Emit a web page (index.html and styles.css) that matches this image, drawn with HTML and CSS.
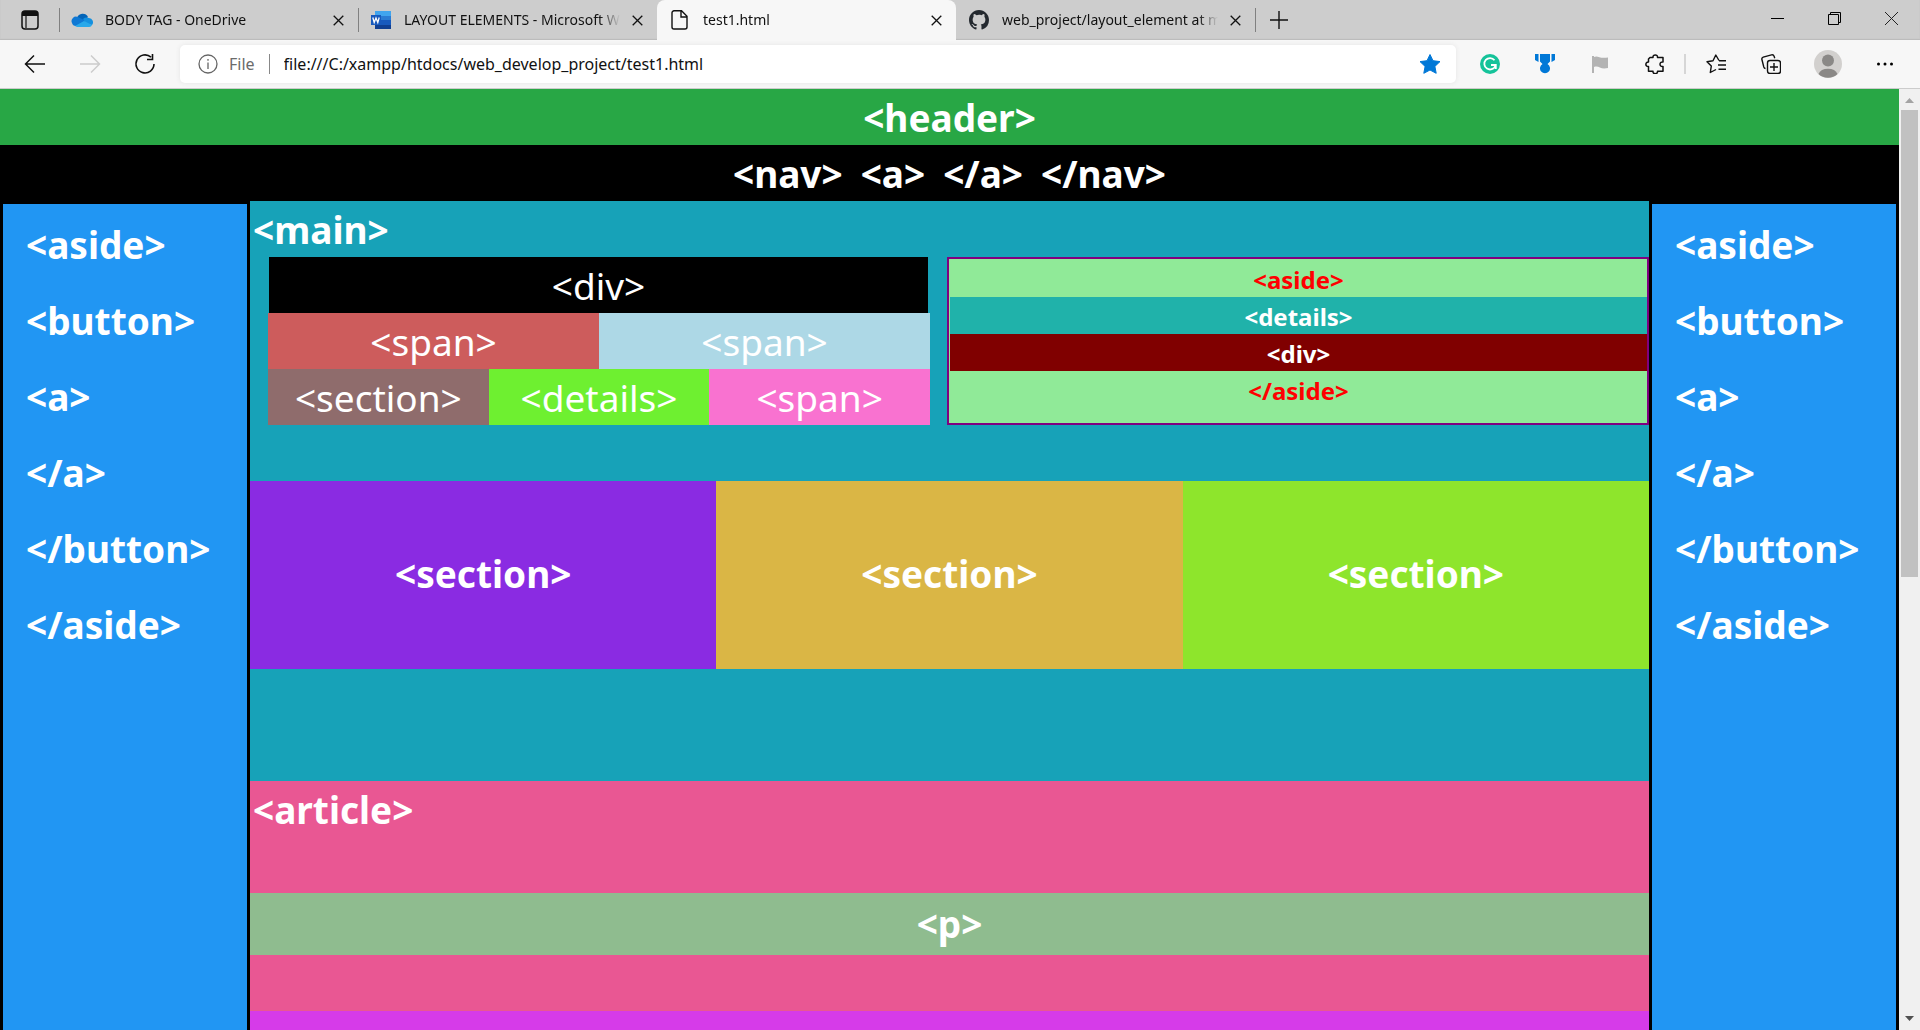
FILE: index.html
```html
<!DOCTYPE html>
<html lang="en">
<head>
<meta charset="utf-8">
<title>test1.html</title>
<link rel="stylesheet" href="styles.css">
</head>
<body>
<div class="tabstrip">
  <button class="tab-menu" aria-label="Tab actions"><svg width="20" height="22" viewBox="0 0 20 22"><rect x="2" y="2" width="16" height="18" rx="3" fill="none" stroke="#111" stroke-width="1.5"/><path d="M2 7V5a3 3 0 0 1 3-3h10a3 3 0 0 1 3 3v2z" fill="#111"/><path d="M6 7v12" stroke="#111" stroke-width="1.2"/></svg></button>
  <div class="tab">
    <svg width="22" height="20" viewBox="0 0 22 20"><path d="M6 8a6 6 0 0 1 11-1l-5 5z" fill="#0364b8"/><path d="M1 13a4.500 4.500 0 0 1 6-6l8 4-5 5H5a4 4 0 0 1-4-3z" fill="#0f78d4"/><path d="M12 9a6 6 0 0 1 6-1 4.300 4.300 0 0 1 3 7l-5-1z" fill="#1490df"/><path d="M4 16l9-5 8 4a3 3 0 0 1-3 2H6z" fill="#28a8ea"/></svg>
    <span class="tab-title">BODY TAG - OneDrive</span>
    <button class="tab-close" aria-label="Close tab"><svg width="11" height="11" viewBox="0 0 11 11"><path d="M.7.7l9.600 9.600M10.300.7L.7 10.300" stroke="#111" stroke-width="1.300"/></svg></button>
  </div>
  <div class="tab">
    <svg width="22" height="20" viewBox="0 0 22 20"><path d="M5 1h16v5H5z" fill="#41a5ee"/><path d="M5 6h16v4H5z" fill="#2b7cd3"/><path d="M5 10h16v5H5z" fill="#185abd"/><path d="M5 15h16v4H5z" fill="#103f91"/><path d="M1 5h10v10H1z" fill="#185abd"/><path d="M2.800 7.500l1.400 5L6 8l1.800 4.500 1.400-5" fill="none" stroke="#fff" stroke-width="1.300"/></svg>
    <span class="tab-title">LAYOUT ELEMENTS - Microsoft Word</span>
    <button class="tab-close" aria-label="Close tab"><svg width="11" height="11" viewBox="0 0 11 11"><path d="M.7.7l9.600 9.600M10.300.7L.7 10.300" stroke="#111" stroke-width="1.300"/></svg></button>
  </div>
  <div class="tab tab-active">
    <svg width="22" height="20" viewBox="0 0 22 20"><path d="M5 .8h7.500L18 6.200V17a2 2 0 0 1-2 2H5a2 2 0 0 1-2-2V2.800a2 2 0 0 1 2-2zM12 1v6h6" fill="none" stroke="#111" stroke-width="1.400"/></svg>
    <span class="tab-title">test1.html</span>
    <button class="tab-close" aria-label="Close tab"><svg width="11" height="11" viewBox="0 0 11 11"><path d="M.7.7l9.600 9.600M10.300.7L.7 10.300" stroke="#111" stroke-width="1.300"/></svg></button>
  </div>
  <div class="tab">
    <svg width="22" height="20" viewBox="-0.800 0 17.600 16"><path fill="#24292f" d="M8 0C3.580 0 0 3.580 0 8c0 3.540 2.290 6.530 5.470 7.590.4.070.55-.17.55-.38 0-.19-.01-.82-.01-1.490-2.010.37-2.530-.49-2.690-.94-.09-.23-.48-.94-.82-1.130-.28-.15-.68-.52-.01-.53.63-.01 1.080.58 1.230.82.720 1.210 1.870.87 2.330.66.070-.52.280-.87.510-1.070-1.780-.2-3.640-.89-3.640-3.950 0-.87.310-1.590.820-2.150-.08-.2-.36-1.020.08-2.120 0 0 .67-.21 2.200.82A7.700 7.700 0 0 1 8 3.860c.68 0 1.360.09 2 .27 1.530-1.040 2.200-.82 2.200-.82.440 1.100.160 1.920.080 2.120.510.560.820 1.270.820 2.150 0 3.070-1.870 3.750-3.650 3.950.290.250.540.730.540 1.480 0 1.070-.01 1.930-.01 2.200 0 .21.150.460.550.380A8 8 0 0 0 16 8c0-4.420-3.580-8-8-8z"/></svg>
    <span class="tab-title">web_project/layout_element at main</span>
    <button class="tab-close" aria-label="Close tab"><svg width="11" height="11" viewBox="0 0 11 11"><path d="M.7.7l9.600 9.600M10.300.7L.7 10.300" stroke="#111" stroke-width="1.300"/></svg></button>
  </div>
  <button class="new-tab" aria-label="New tab"><svg width="18" height="18" viewBox="0 0 18 18"><path d="M9 0v18M0 9h18" stroke="#111" stroke-width="1.400"/></svg></button>
  <div class="window-controls">
    <button class="window-button" aria-label="Minimize"><svg width="13" height="13" viewBox="0 0 13 13"><path d="M0 6.500h13" stroke="#000"/></svg></button>
    <button class="window-button" aria-label="Restore"><svg width="13" height="13" viewBox="0 0 13 13"><path d="M.5 2.500h10v10H.5zM2.500 2.500v-2h10v10h-2" fill="none" stroke="#000"/></svg></button>
    <button class="window-button" aria-label="Close"><svg width="13" height="13" viewBox="0 0 13 13"><path d="M0 0l13 13M13 0L0 13" stroke="#222"/></svg></button>
  </div>
</div>
<div class="toolbar">
  <button class="tool" aria-label="Back"><svg width="22" height="20" viewBox="0 0 22 20"><path d="M21 10H2M10 1.500L1.500 10l8.500 8.500" fill="none" stroke="#111" stroke-width="1.500"/></svg></button>
  <button class="tool" aria-label="Forward" disabled><svg width="22" height="20" viewBox="0 0 22 20"><path d="M1 10h19M12 1.500l8.500 8.500-8.500 8.500" fill="none" stroke="#ccc" stroke-width="1.500"/></svg></button>
  <button class="tool" aria-label="Refresh"><svg width="22" height="22" viewBox="0 0 22 22"><path d="M20 11a9 9 0 1 1-3-6.800M18.500 1v5.500H13" fill="none" stroke="#111" stroke-width="1.600"/></svg></button>
  <div class="address">
    <svg class="info" width="20" height="20" viewBox="0 0 20 20"><circle cx="10" cy="10" r="9" fill="none" stroke="#666" stroke-width="1.300"/><path d="M10 8.500V15M10 5v1.700" stroke="#666" stroke-width="1.300"/></svg>
    <label class="scheme" for="url">File</label>
    <input class="url" id="url" type="text" value="file:///C:/xampp/htdocs/web_develop_project/test1.html">
    <button class="favourite" aria-label="Edit favourite"><svg width="22" height="20" viewBox="0 0 22 20"><path d="M11 .5l3 6.200 7 .9-5.100 4.800 1.300 6.900L11 16l-6.200 3.300 1.300-6.900L1 7.600l7-.9z" fill="#0078d7" stroke="#0078d7" stroke-linejoin="round"/></svg></button>
  </div>
  <button class="tool" aria-label="Grammarly"><svg width="20" height="20" viewBox="0 0 20 20"><circle cx="10" cy="10" r="10" fill="#15c39a"/><path d="M14.500 6.200A5.700 5.700 0 1 0 15.300 12M11 11h4.800v4" fill="none" stroke="#fff" stroke-width="1.800"/></svg></button>
  <button class="tool" aria-label="Rewards"><svg width="20" height="20" viewBox="0 0 20 20"><path d="M0 0h3.500v8L0 6zM5 0h10v7.500l-2.500 2.500a5 5 0 1 1-5 0L5 7.500zM16.500 0H20v6l-3.500 2z" fill="#0078d7"/></svg></button>
  <button class="tool" aria-label="Flag"><svg width="16" height="18" viewBox="0 0 16 18"><path d="M0 1h2v17H0zM2 2c4-2 5 2 14 .5V13C8 15 7 10 2 12z" fill="#b3b3b3"/></svg></button>
  <button class="tool" aria-label="Extensions"><svg width="20" height="20" viewBox="0 0 20 20"><path d="M5 3.500h3C7.500 0 13 0 12.500 3.500H18V8c-4-.8-4 5.300 0 4.500v4.800h-5.500c.5 3.200-5 3.200-4.500 0H3.500v-4.800C.2 13-.2 7.800 3.500 8V5z" fill="none" stroke="#111" stroke-width="1.500" stroke-linejoin="round"/></svg></button>
  <span class="tool-divider"></span>
  <button class="tool" aria-label="Favourites"><svg width="20" height="20" viewBox="0 0 20 20"><path d="M13 6.500L9.800 1 7 6.800l-6 .9 4.300 4.400-1 6.400L10 15.500M13 6.800h7M12 11h8M12.500 15.200H20" fill="none" stroke="#111" stroke-width="1.400" stroke-linejoin="round"/></svg></button>
  <button class="tool" aria-label="Collections"><svg width="20" height="20" viewBox="0 0 20 20"><rect x="6.500" y="6.500" width="13" height="13" rx="2.500" fill="none" stroke="#111" stroke-width="1.400"/><path d="M13 9v8M9 13h8M4.500 14.500c-1 0-1.400-.6-1.700-1.500L.9 5.500C.6 4.200 1 3.500 2.200 3.100L10.500.9c1.500-.3 2.200.1 2.700 1.500l.5 1.800" fill="none" stroke="#111" stroke-width="1.400"/></svg></button>
  <button class="tool tool-profile" aria-label="Profile"><svg width="28" height="28" viewBox="0 0 28 28"><circle cx="14" cy="14" r="14" fill="#d2d0ce"/><circle cx="14" cy="10.500" r="6" fill="#8a8886"/><path d="M4.500 24a10 7.500 0 0 1 19 0 14 14 0 0 1-19 0z" fill="#8a8886"/></svg></button>
  <button class="tool" aria-label="Settings and more"><svg width="18" height="4" viewBox="0 0 18 4"><circle cx="2.500" cy="2" r="1.500"/><circle cx="9" cy="2" r="1.500"/><circle cx="15.500" cy="2" r="1.500"/></svg></button>
</div>
<div class="viewport">
  <div class="page">
    <header class="page-header">&lt;header&gt;</header>
    <nav class="page-nav"><span>&lt;nav&gt;</span> <span>&lt;a&gt;</span> <span>&lt;/a&gt;</span> <span>&lt;/nav&gt;</span></nav>
    <div class="columns">
      <aside class="side">
        <p>&lt;aside&gt;</p><p>&lt;button&gt;</p><p>&lt;a&gt;</p><p>&lt;/a&gt;</p><p>&lt;/button&gt;</p><p>&lt;/aside&gt;</p>
      </aside>
      <main class="main">
        <h1 class="heading">&lt;main&gt;</h1>
        <div class="demo">
          <div class="blocks">
            <div class="block-div">&lt;div&gt;</div>
            <div class="block-row">
              <span class="cell indian">&lt;span&gt;</span>
              <span class="cell lightblue">&lt;span&gt;</span>
            </div>
            <div class="block-row">
              <span class="cell rosy">&lt;section&gt;</span>
              <span class="cell lime">&lt;details&gt;</span>
              <span class="cell pink">&lt;span&gt;</span>
            </div>
          </div>
          <aside class="inner-aside">
            <p>&lt;aside&gt;</p>
            <p class="sea">&lt;details&gt;</p>
            <p class="maroon">&lt;div&gt;</p>
            <p>&lt;/aside&gt;</p>
          </aside>
        </div>
        <div class="sections">
          <section class="violet">&lt;section&gt;</section>
          <section class="gold">&lt;section&gt;</section>
          <section class="green">&lt;section&gt;</section>
        </div>
        <article class="article">
          <h2 class="heading">&lt;article&gt;</h2>
          <p class="paragraph">&lt;p&gt;</p>
          <div class="article-end"></div>
        </article>
      </main>
      <aside class="side">
        <p>&lt;aside&gt;</p><p>&lt;button&gt;</p><p>&lt;a&gt;</p><p>&lt;/a&gt;</p><p>&lt;/button&gt;</p><p>&lt;/aside&gt;</p>
      </aside>
    </div>
  </div>
  <div class="scrollbar">
    <svg class="arrow" width="9" height="5" viewBox="0 0 9 5"><path d="M0 5l4.500-5L9 5z" fill="#a3a3a3"/></svg>
    <div class="track"><div class="thumb"></div></div>
    <svg class="arrow" width="9" height="5" viewBox="0 0 9 5"><path d="M0 0l4.500 5L9 0z" fill="#505050"/></svg>
  </div>
</div>
</body>
</html>
```
FILE: styles.css
```css
* { box-sizing: border-box; }

body {
  margin: 0;
  height: 100vh;
  display: flex;
  flex-direction: column;
  overflow: hidden;
  font-family: "Noto Sans", "Open Sans", sans-serif;
  color: #111;
}

p, h1, h2 { margin: 0; font: inherit; }

button {
  display: flex;
  align-items: center;
  justify-content: center;
  padding: 0;
  border: 0;
  background: none;
  color: inherit;
}

svg { display: block; flex: none; }

/* Tab strip */
.tabstrip {
  display: flex;
  flex: none;
  height: 40px;
  background: #cdcdcd;
  box-shadow: inset 0 -1px 1px #bbb;
}

.tab-menu { width: 59px; }

.tab {
  position: relative;
  display: flex;
  align-items: center;
  gap: 12px;
  flex: 0 1 299px;
  min-width: 0;
  padding: 0 14px 0 12px;
}

.tab::before {
  content: "";
  position: absolute;
  left: 0;
  top: 8px;
  width: 1px;
  height: 24px;
  background: #808080;
}

.tab-active {
  background: #f7f7f7;
  border-radius: 8px 8px 0 0;
}

.tab-active::before, .tab-active + .tab::before { display: none; }

.tab-title {
  flex: 1;
  overflow: hidden;
  white-space: nowrap;
  font-size: 14px;
  line-height: 20px;
  -webkit-mask-image: linear-gradient(to left, transparent, #000 20px);
  mask-image: linear-gradient(to left, transparent, #000 20px);
}

.tab-close { width: 11px; height: 20px; }

.new-tab {
  width: 46px;
  height: 24px;
  margin-top: 8px;
  border-left: 1px solid #808080;
}

.window-controls { display: flex; margin-left: auto; height: 36px; }
.window-button { width: 57px; }

/* Toolbar */
.toolbar {
  display: flex;
  align-items: center;
  flex: none;
  height: 49px;
  padding: 0 8px 0 7px;
  background: #f7f7f7;
  border-bottom: 1px solid #ccc;
}

.tool { flex: none; width: 55px; height: 38px; }
.tool-profile { width: 59px; }

.tool-divider {
  width: 2px;
  height: 20px;
  margin: 0 2px;
  background: #d6d6d6;
}

.address {
  display: flex;
  align-items: center;
  flex: 1;
  height: 38px;
  margin: 0 6px 0 8px;
  padding: 0 0 0 18px;
  background: #fff;
  border-radius: 5px;
  box-shadow: 0 0 5px #e4e4e4;
}

.scheme {
  margin-left: 11px;
  padding-right: 14px;
  border-right: 1px solid #888;
  font-size: 16px;
  line-height: 20px;
  color: #6b6b6b;
}

.url {
  flex: 1;
  min-width: 0;
  padding: 0 14px;
  border: 0;
  outline: 0;
  background: none;
  font: 16px/24px "Noto Sans", "Open Sans", sans-serif;
  color: #111;
}

.favourite { width: 52px; height: 38px; }

/* Browser viewport */
.viewport { display: flex; flex: 1; min-height: 0; }

.page {
  flex: 1;
  min-width: 0;
  overflow: hidden;
  background: #000;
  color: #fff;
  font-size: 37px;
  font-weight: 700;
  line-height: 54px;
}

.page-header { padding-top: 2px; text-align: center; background: #28a745; }

.page-nav {
  display: flex;
  justify-content: center;
  gap: 18px;
  padding-top: 2px;
  background: #000;
}

.columns { display: flex; min-height: 100%; }

.side {
  flex: none;
  width: 250px;
  padding: 14px 23px;
  border: 3px solid #000;
  background: #2196f3;
}

.side p + p { margin-top: 22px; }

.main { flex: 1; min-width: 0; background: #17a2b8; }
.heading { padding: 2px 3px 0; font-weight: 700; }

.demo {
  display: flex;
  gap: 17px;
  padding-left: 18px;
  margin-bottom: 56px;
}

.blocks { flex: 662 1 0; font-weight: 400; text-align: center; }
.block-div { margin: 0 2px 0 1px; padding-top: 2px; background: #000; }
.block-row { display: flex; }
.cell { flex: 1 1 0; padding-top: 2px; }

.indian { background: #cd5c5c; }
.lightblue { background: #add8e6; }
.rosy { background: #8f6c6c; }
.lime { background: #6ef030; }
.pink { background: #f972d0; }

.inner-aside {
  flex: 697 1 0;
  padding: 1px 0 0 1px;
  border: 2px solid #800080;
  background: #90ea98;
  color: #f00;
  font-size: 24px;
  line-height: 35px;
  text-align: center;
}

.inner-aside p { padding-top: 2px; }
.sea { background: #20b2aa; color: #fff; }
.maroon { background: #800000; color: #fff; }

.sections { display: flex; margin-bottom: 112px; text-align: center; }
.sections section { flex: 1 1 0; padding: 66px 0 68px; }
.violet { background: #8a2be2; }
.gold { background: #dab645; }
.green { background: #8ee52c; }

.article { background: #e95793; }
.paragraph {
  margin: 56px 0;
  padding: 4px 0;
  background: #8fbc8f;
  text-align: center;
}
.article-end { height: 200px; background: #d63be9; }

/* Scrollbar */
.scrollbar {
  display: flex;
  flex-direction: column;
  align-items: center;
  flex: none;
  width: 21px;
  padding: 9px 0;
  background: #f0f0f0;
}

.track { flex: 1; width: 17px; padding: 7px 0; }
.thumb { height: 52%; background: #c1c1c1; }
```
